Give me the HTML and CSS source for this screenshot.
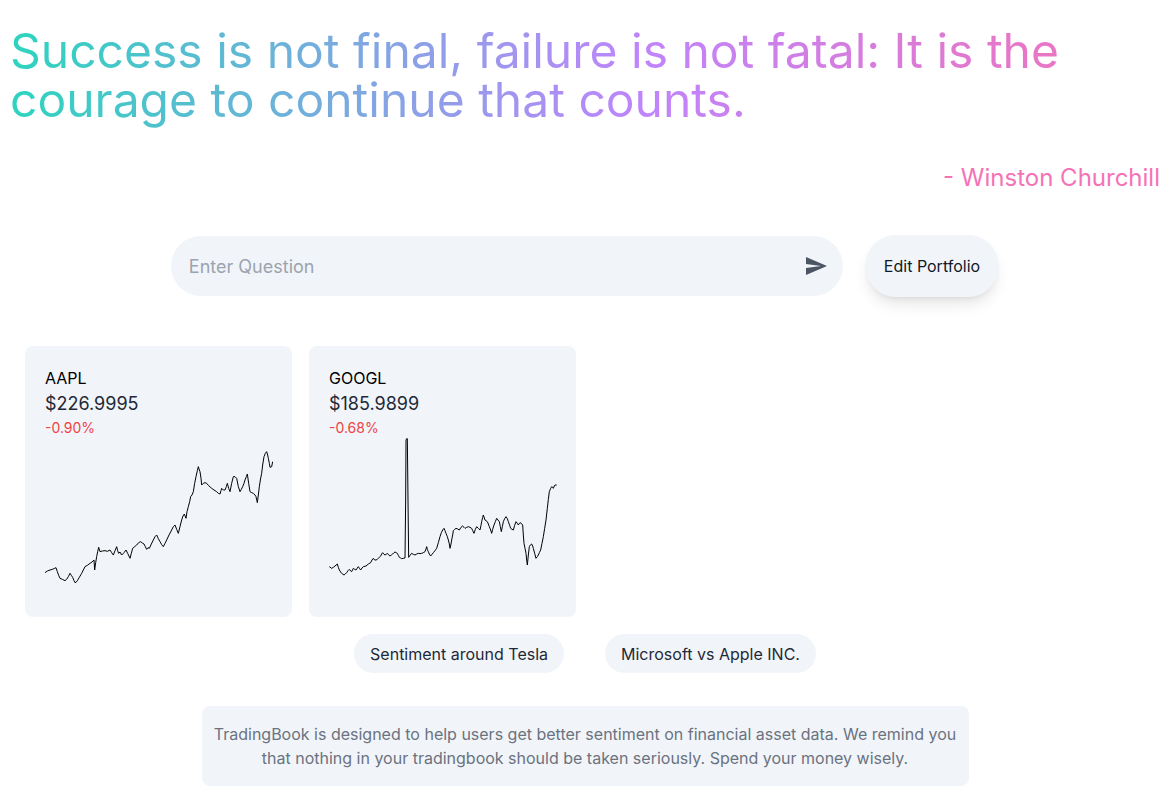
FILE: index.html
```html
<!DOCTYPE html>
<html lang="en">
<head>
<meta charset="utf-8">
<title>TradingBook</title>
<link rel="stylesheet" href="styles.css">
</head>
<body>
<main class="page">
  <h1 class="quote">Success is not final, failure is not fatal: It is the courage to continue that counts.</h1>
  <p class="author">- Winston Churchill</p>

  <div class="ask-row">
    <form class="ask" onsubmit="return false">
      <input class="ask-input" type="text" placeholder="Enter Question">
      <button class="send" type="submit" aria-label="Send">
        <svg viewBox="0 0 24 24" width="24" height="24"><path d="M2.01 21L23 12 2.01 3 2 10l15 2-15 2z" fill="currentColor"/></svg>
      </button>
    </form>
    <button class="edit" type="button">Edit Portfolio</button>
  </div>

  <section class="cards">
    <article class="card">
      <div class="ticker">AAPL</div>
      <div class="price">$226.9995</div>
      <div class="change">-0.90%</div>
      <svg class="chart" viewBox="75 294 684 477" width="228" height="159" preserveAspectRatio="none">
        <polyline fill="none" stroke="#000" stroke-width="1" vector-effect="non-scaling-stroke" stroke-linejoin="round"
          points="75,698 82,693 90,690 97,688 104,685 108,683 112,695 116,706 120,715 127,718 135,722 140,718 145,710 150,700 154,706 158,712 162,722 165,728 169,726 172,722 178,712 185,700 190,690 195,680 202,676 210,670 216,666 222,660 224,690 227,668 230,650 233,635 236,622 240,635 247,633 255,632 262,634 270,630 275,638 280,645 285,632 290,620 293,632 296,640 300,636 305,645 312,638 318,630 323,640 330,655 334,640 338,625 344,620 350,615 356,608 362,605 367,609 372,612 376,620 380,628 384,623 388,625 394,612 400,600 405,590 410,585 415,596 420,605 425,614 430,620 435,610 440,600 447,585 455,570 460,560 465,555 470,568 475,580 480,560 485,540 489,528 493,522 498,535 501,515 505,500 509,485 512,470 516,465 520,455 524,430 528,410 532,392 535,380 538,390 540,395 543,415 545,435 550,430 555,428 560,430 566,437 575,445 582,450 590,455 595,460 600,462 603,452 605,445 610,450 615,450 619,440 622,430 626,445 630,455 635,430 640,410 645,410 650,415 655,440 660,455 664,448 668,440 672,430 675,420 679,410 682,402 686,430 690,455 695,458 700,460 705,465 708,470 712,488 715,465 718,440 721,420 725,400 728,375 732,350 736,340 740,335 743,345 745,355 748,370 750,382 755,380 758,365"/>
      </svg>
    </article>
    <article class="card">
      <div class="ticker">GOOGL</div>
      <div class="price">$185.9899</div>
      <div class="change">-0.68%</div>
      <svg class="chart" viewBox="87 294 684 477" width="228" height="159" preserveAspectRatio="none">
        <polyline fill="none" stroke="#000" stroke-width="1" vector-effect="non-scaling-stroke" stroke-linejoin="round"
          points="88,680 95,685 100,682 105,678 112,672 115,682 118,690 122,696 125,700 132,705 136,702 140,698 144,692 148,688 152,693 155,695 160,685 164,688 168,690 172,684 175,680 179,686 182,690 186,684 190,680 198,678 205,672 212,668 216,660 220,655 224,660 228,660 232,658 235,655 240,650 242,648 245,642 248,638 252,643 255,645 260,642 262,640 266,645 270,648 274,645 278,642 282,638 285,636 289,638 292,640 295,646 298,652 302,654 305,656 310,655 315,654 317,480 318,300 320,296 322,296 324,480 326,652 330,646 335,640 340,643 345,645 350,642 355,640 360,641 365,640 370,638 375,635 378,627 380,620 382,628 385,635 388,642 392,648 396,643 400,638 405,632 410,625 415,608 420,590 424,578 428,570 432,565 435,572 438,580 442,590 445,600 448,612 450,625 453,612 455,600 458,585 460,572 464,568 468,565 473,567 478,570 483,562 488,558 492,562 495,565 500,562 505,560 510,562 515,565 518,572 522,580 526,568 530,560 535,565 540,570 543,556 545,545 548,532 550,525 553,534 555,540 558,542 562,545 565,552 568,560 572,570 575,580 578,568 582,555 586,545 590,535 594,540 598,545 601,560 604,575 607,560 610,545 614,536 618,530 622,536 625,545 629,556 632,565 636,568 640,570 644,556 648,545 652,550 655,555 658,550 662,548 665,552 668,555 670,585 672,610 675,625 678,640 680,660 682,675 685,645 688,620 692,614 695,612 698,618 700,625 704,640 708,655 712,650 715,645 718,638 722,630 726,610 730,590 734,565 738,540 740,522 742,505 745,478 748,455 752,445 755,440 758,442 760,445 763,438 765,435 770,435"/>
      </svg>
    </article>
  </section>

  <div class="pills">
    <button class="pill" type="button">Sentiment around Tesla</button>
    <button class="pill" type="button">Microsoft vs Apple INC.</button>
  </div>

  <p class="note">TradingBook is designed to help users get better sentiment on financial asset data. We remind you that nothing in your tradingbook should be taken seriously. Spend your money wisely.</p>
</main>
</body>
</html>
```

FILE: styles.css
```css
* { box-sizing: border-box; }

html, body {
  margin: 0;
  padding: 0;
  background: #ffffff;
}

body {
  font-family: Inter, "Noto Sans", sans-serif;
  color: #111827;
}

.page {
  padding: 26px 14px 0 10px;
  display: flex;
  flex-direction: column;
}

.quote {
  margin: 0;
  font-family: Inter, "Noto Sans", sans-serif;
  font-weight: 400;
  font-size: 48px;
  line-height: 49px;
  background-image: linear-gradient(90deg, #2dd4bf 0%, #c084fc 55%, #f472b6 100%);
  -webkit-background-clip: text;
  background-clip: text;
  color: transparent;
  padding: 0 80px 14px 0;
}

.author {
  margin: 24px 0 0;
  text-align: right;
  font-family: Inter, "Noto Sans", sans-serif;
  font-size: 24px;
  line-height: 32px;
  color: #f472b6;
}

.ask-row {
  margin-top: 41px;
  display: flex;
  justify-content: center;
  align-items: center;
  gap: 22px;
}

.ask {
  width: 672px;
  height: 60px;
  border-radius: 9999px;
  background: #f1f5f9;
  display: flex;
  align-items: center;
  padding: 0 15px 0 16px;
}

.ask-input {
  flex: 1;
  border: 0;
  outline: 0;
  background: transparent;
  font-family: Inter, sans-serif;
  font-size: 18px;
  color: #111827;
}

.ask-input::placeholder { color: #9ca3af; }

.send {
  border: 0;
  background: transparent;
  padding: 0;
  color: #4b5563;
  display: flex;
  cursor: pointer;
}

.edit {
  height: 62px;
  padding: 0 19px;
  border: 0;
  border-radius: 9999px;
  background: #f1f5f9;
  font-family: Inter, sans-serif;
  font-size: 16px;
  color: #111827;
  box-shadow: 0 10px 15px -3px rgba(0,0,0,0.1), 0 4px 6px -4px rgba(0,0,0,0.1);
  cursor: pointer;
}

.cards {
  margin-top: 49px;
  padding-left: 15px;
  display: flex;
  gap: 17px;
}

.card {
  width: 267px;
  height: 271px;
  border-radius: 8px;
  background: #f1f5f9;
  padding: 20px;
  display: flex;
  flex-direction: column;
}

.ticker {
  font-size: 16px;
  line-height: 24px;
  font-weight: 400;
  color: #000000;
}

.price {
  font-size: 18px;
  line-height: 28px;
  color: #1f2937;
}

.change {
  font-size: 14px;
  line-height: 20px;
  color: #ef4444;
}

.chart {
  display: block;
}

.pills {
  margin-top: 17px;
  display: flex;
  justify-content: center;
  gap: 41px;
}

.pill {
  height: 39px;
  padding: 0 16px;
  border: 0;
  border-radius: 9999px;
  background: #f1f5f9;
  font-family: Inter, sans-serif;
  font-size: 16px;
  color: #1f2937;
}

.note {
  align-self: center;
  width: 767px;
  margin: 33px 0 0;
  padding: 16px 6px;
  border-radius: 8px;
  background: #f1f5f9;
  text-align: center;
  font-size: 16px;
  line-height: 24px;
  color: #6b7280;
}
```
